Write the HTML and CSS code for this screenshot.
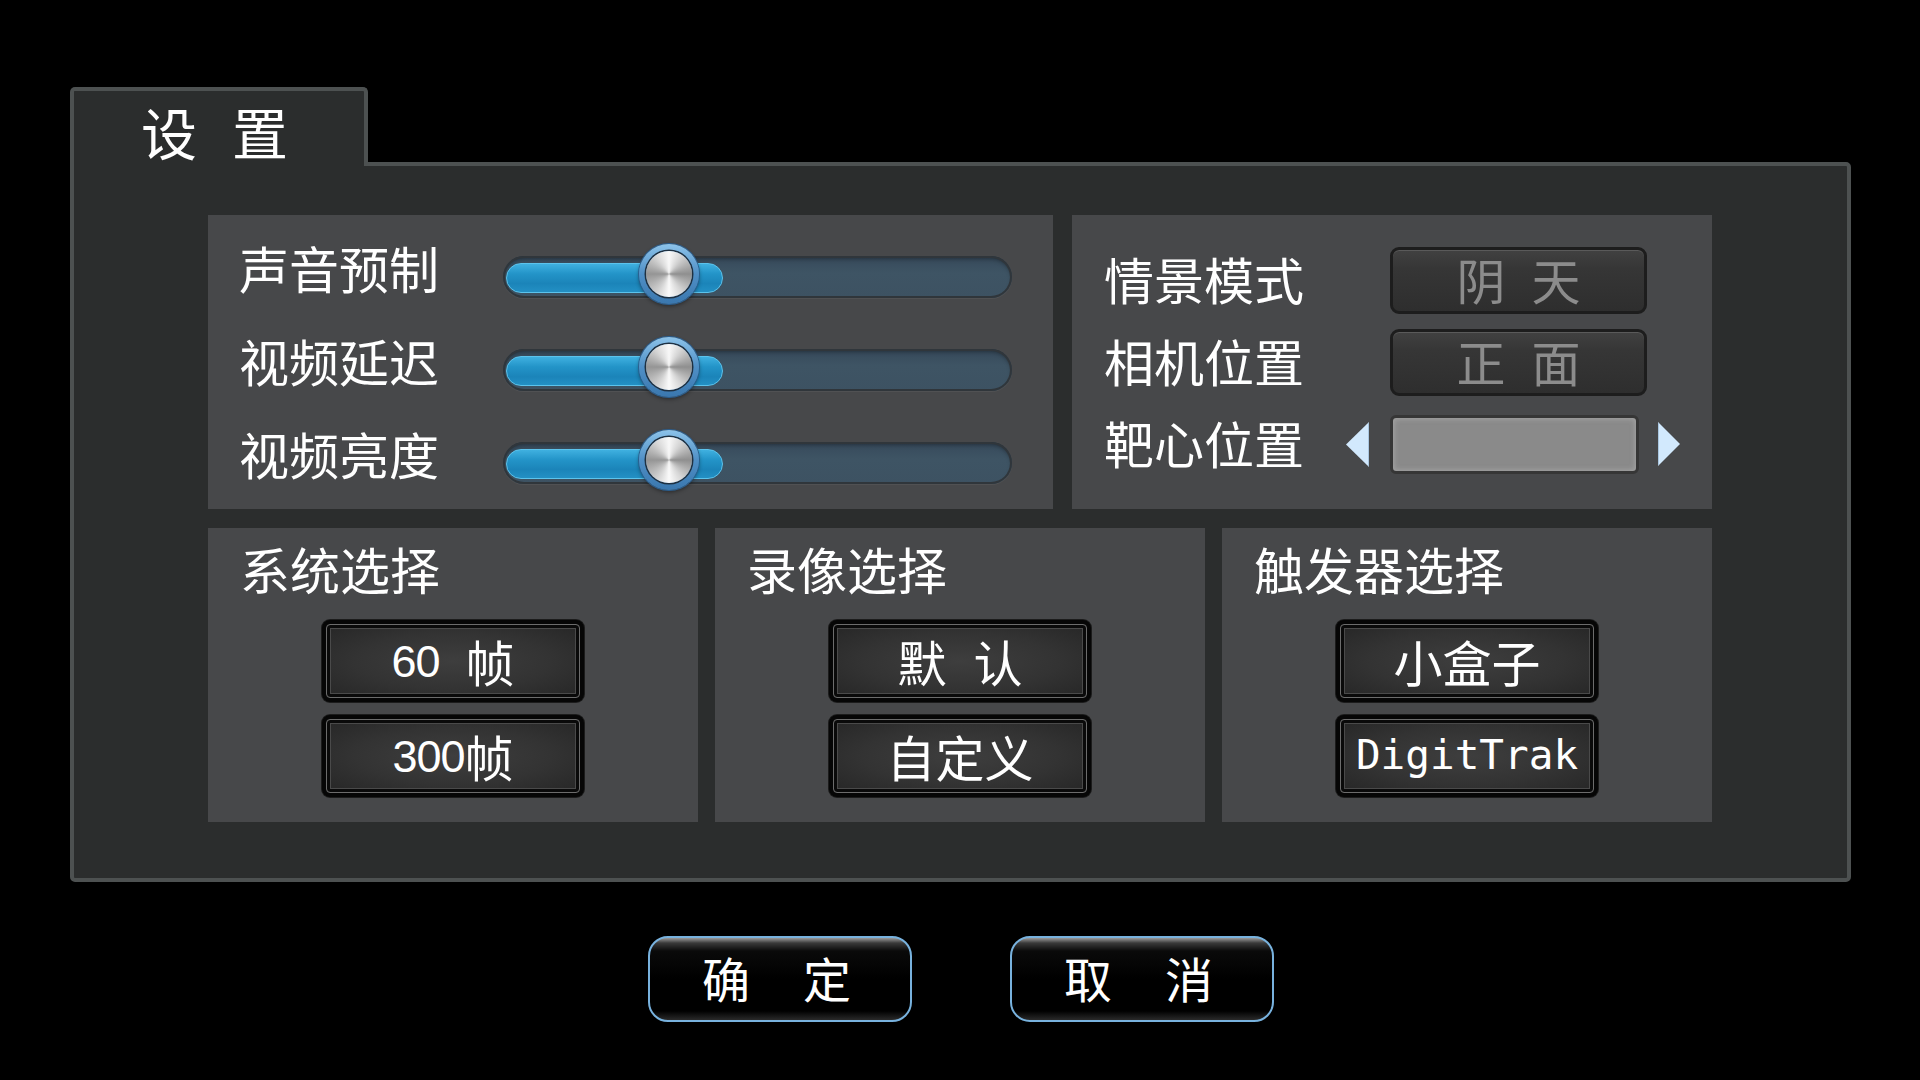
FILE: index.html
```html
<!DOCTYPE html>
<html lang="zh-CN">
<head>
<meta charset="utf-8">
<title>设置</title>
<link rel="stylesheet" href="styles.css">
</head>
<body>
<div class="stage">
  <div class="dialog">
    <div class="tab"><span>设</span><span>置</span></div>
    <div class="panel">
      <div class="grid-top">
        <section class="sec sec-sliders">
          <div class="srow">
            <div class="slabel">声音预制</div>
            <div class="track"><div class="fill"></div><div class="knob"></div></div>
          </div>
          <div class="srow">
            <div class="slabel">视频延迟</div>
            <div class="track"><div class="fill"></div><div class="knob"></div></div>
          </div>
          <div class="srow">
            <div class="slabel">视频亮度</div>
            <div class="track"><div class="fill"></div><div class="knob"></div></div>
          </div>
        </section>
        <section class="sec sec-props">
          <div class="prow">
            <div class="plabel">情景模式</div>
            <div class="pbtn"><span>阴</span><span>天</span></div>
          </div>
          <div class="prow">
            <div class="plabel">相机位置</div>
            <div class="pbtn"><span>正</span><span>面</span></div>
          </div>
          <div class="prow">
            <div class="plabel">靶心位置</div>
            <svg class="arrow" width="23" height="45" viewBox="0 0 23 45"><polygon points="23,0 0,22.5 23,45" fill="#d2e9fd"/><line x1="22.5" y1="1" x2="22.5" y2="44" stroke="#a9c6e0" stroke-width="1"/></svg>
            <div class="target"></div>
            <svg class="arrow" width="22" height="44" viewBox="0 0 22 44"><polygon points="0,0 22,22 0,44" fill="#d2e9fd"/><line x1="0.5" y1="1" x2="0.5" y2="43" stroke="#a9c6e0" stroke-width="1"/></svg>
          </div>
        </section>
      </div>
      <div class="grid-bot">
        <section class="sec sec-opt">
          <div class="otitle">系统选择</div>
          <div class="obtns">
            <div class="opt"><div class="face"><span class="num">60</span><span class="sp"></span>帧</div></div>
            <div class="opt"><div class="face"><span class="num">300</span>帧</div></div>
          </div>
        </section>
        <section class="sec sec-opt">
          <div class="otitle">录像选择</div>
          <div class="obtns">
            <div class="opt"><div class="face wide"><span>默</span><span>认</span></div></div>
            <div class="opt"><div class="face">自定义</div></div>
          </div>
        </section>
        <section class="sec sec-opt">
          <div class="otitle">触发器选择</div>
          <div class="obtns">
            <div class="opt"><div class="face">小盒子</div></div>
            <div class="opt"><div class="face mono">DigitTrak</div></div>
          </div>
        </section>
      </div>
    </div>
    <div class="actions">
      <button class="dlg"><span>确</span><span>定</span></button>
      <button class="dlg"><span>取</span><span>消</span></button>
    </div>
  </div>
</div>
</body>
</html>
```
FILE: styles.css
```css
html, body {
  margin: 0;
  padding: 0;
  background: #000;
}
body {
  width: 1920px;
  height: 1080px;
  overflow: hidden;
  color: #fff;
  font-family: "Noto Sans CJK SC", "Noto Sans", sans-serif;
}
.stage {
  padding: 87px 0 0 70px;
}
.dialog {
  width: 1781px;
}
.tab {
  position: relative;
  z-index: 1;
  box-sizing: border-box;
  width: 298px;
  height: 79px;
  margin-bottom: -4px;
  border: 4px solid #4d5151;
  border-bottom: 0;
  border-radius: 5px 5px 0 0;
  background: #2b2d2d;
  display: flex;
  gap: 35px;
  padding: 12px 0 0 67px;
  font-size: 56px;
  line-height: 1;
}
.panel {
  box-sizing: border-box;
  height: 720px;
  border: 4px solid #4d5151;
  border-radius: 0 5px 5px 5px;
  background: #2b2d2d;
  padding: 49px 135px 0 134px;
}
.grid-top {
  display: grid;
  grid-template-columns: 845px 640px;
  column-gap: 19px;
  height: 293px;
}
.grid-bot {
  display: grid;
  grid-template-columns: repeat(3, 490px);
  column-gap: 17px;
  margin-top: 20px;
  height: 294px;
}
.sec {
  background: #47484a;
  box-sizing: border-box;
}
/* sliders */
.sec-sliders {
  padding: 15px 0 0 31px;
}
.srow {
  display: flex;
  align-items: center;
  height: 93px;
}
.slabel {
  width: 264px;
  font-size: 50px;
  line-height: 1;
  margin-bottom: 19px;
}
.track {
  position: relative;
  width: 509px;
  height: 42px;
  border-radius: 21px;
  background: linear-gradient(#36495a, #3e5464 40%, #3d5262);
  box-shadow: inset 0 0 0 2px #30363b, inset 0 3px 4px rgba(0,0,0,0.35), 0 1px 1px rgba(255,255,255,0.06);
}
.fill {
  position: absolute;
  left: 3px;
  top: 7px;
  width: 217px;
  height: 30px;
  box-sizing: border-box;
  border-radius: 15px;
  border: 1px solid #5cc3ec;
  background: linear-gradient(#3fb0e0 0%, #2394c8 35%, #1b84b9 70%, #2390c4 100%);
}
.knob {
  position: absolute;
  left: 136px;
  top: -12px;
  width: 60px;
  height: 60px;
  border-radius: 50%;
  background: linear-gradient(#8cc3ea, #4f8fc6 50%, #3a77ae);
  box-shadow: 0 0 0 1px #2c5f8f, 0 2px 4px rgba(0,0,0,0.45);
  display: grid;
  place-items: center;
}
.knob::after {
  content: "";
  width: 46px;
  height: 46px;
  border-radius: 50%;
  background: conic-gradient(#f8f8f8 0deg, #d4d4d4 35deg, #8f8f8f 90deg, #d6d6d6 145deg, #fafafa 180deg, #cfcfcf 215deg, #959595 270deg, #d8d8d8 325deg, #f8f8f8 360deg);
  box-shadow: 0 0 0 1.5px #1f3142;
}
/* properties */
.sec-props {
  padding: 24px 0 0 32px;
}
.prow {
  display: flex;
  align-items: center;
  height: 82px;
}
.plabel {
  width: 242px;
  font-size: 50px;
  line-height: 1;
  margin-bottom: 4px;
}
.pbtn {
  box-sizing: border-box;
  width: 257px;
  height: 67px;
  margin-left: 44px;
  border: 3px solid #1d1d1d;
  border-radius: 9px;
  background: linear-gradient(#414141, #363636 30%, #2e2e2e);
  box-shadow: inset 0 1px 0 #5a5a5a;
  display: flex;
  justify-content: center;
  align-items: center;
  gap: 26px;
  color: #8c8c8c;
  font-size: 49px;
  line-height: 1;
  padding-bottom: 4px;
}
.arrow {
  display: block;
  flex: none;
}
.target {
  box-sizing: border-box;
  width: 249px;
  height: 59px;
  margin: 0 19px 0 21px;
  border: 3px solid #363636;
  border-radius: 6px;
  background: #8a8a8a;
  box-shadow: inset 0 0 5px 1px #a4a4a4;
}
/* options */
.sec-opt {
  padding-top: 15px;
}
.otitle {
  padding-left: 32px;
  font-size: 50px;
  line-height: 1;
}
.obtns {
  margin-top: 27px;
  display: flex;
  flex-direction: column;
  align-items: center;
  gap: 13px;
}
.opt {
  box-sizing: border-box;
  width: 262px;
  height: 82px;
  padding: 4px;
  border-radius: 8px;
  background: #060606;
  box-shadow: 0 0 0 1px #1c1c1c;
}
.face {
  box-sizing: border-box;
  height: 100%;
  border-radius: 4px;
  border: 1px solid #6c6c6c;
  box-shadow: inset 0 0 0 3px #0a0a0a, inset 0 0 0 4px #4a4a4a;
  background: radial-gradient(ellipse at 50% 50%, #3e3e3e 0%, #333 55%, #262626 100%);
  display: flex;
  justify-content: center;
  align-items: center;
  font-size: 49px;
  line-height: 1;
  color: #fff;
  padding-bottom: 2px;
}
.face.wide {
  gap: 27px;
}
.num {
  font-family: "Liberation Sans", sans-serif;
  font-size: 45px;
  letter-spacing: -1px;
  margin-top: 2px;
}
.sp {
  width: 26px;
}
.face.mono {
  font-family: "DejaVu Sans Mono", monospace;
  font-size: 41px;
}
/* dialog buttons */
.actions {
  display: flex;
  justify-content: center;
  gap: 98px;
  margin-top: 54px;
}
.dlg {
  box-sizing: border-box;
  width: 264px;
  height: 86px;
  border: 2px solid #78b2de;
  border-radius: 20px;
  background: linear-gradient(#9a9a9a 0px, #3a3a3a 5px, #0a0a0a 13px, #000 50%, #000 calc(100% - 9px), #2a2a2a 100%);
  color: #fff;
  font-family: "Noto Sans CJK SC", sans-serif;
  font-size: 48px;
  line-height: 1;
  display: flex;
  justify-content: center;
  align-items: center;
  gap: 53px;
  padding: 0 6px 4px 0;
  cursor: pointer;
}
```
